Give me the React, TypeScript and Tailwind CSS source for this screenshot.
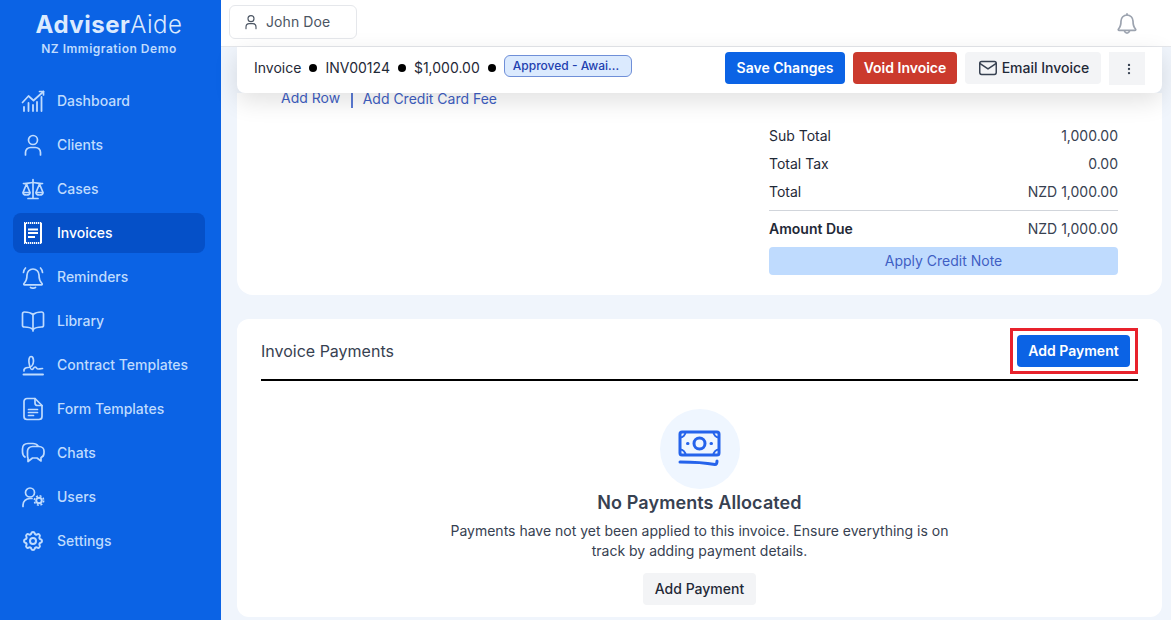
import React from 'react';
import { TbSettings, TbMail, TbDotsVertical } from 'react-icons/tb';

type IconProps = { className?: string };

const Stroke = ({ className, children }: IconProps & { children: React.ReactNode }) => (
  <svg viewBox="0 0 24 24" fill="none" stroke="currentColor" strokeWidth="1.7" strokeLinecap="round" strokeLinejoin="round" className={className}>
    {children}
  </svg>
);

const DashboardIcon = ({ className }: IconProps) => (
  <Stroke className={className}>
    <path d="M1.5 13.5 7.5 7l5 4.500L22.500 2.500" />
    <path d="M18.500 2.500h4v3.500" />
    <path d="M3 22v-4M7.500 22v-8M12 22v-6M16 22v-9M20.500 22V8" strokeWidth="1.800" />
  </Stroke>
);

const UserIcon = ({ className }: IconProps) => (
  <Stroke className={className}>
    <circle cx="12" cy="7" r="4.500" />
    <path d="M4.500 22v-2.500a5 5 0 0 1 5-5h5a5 5 0 0 1 5 5V22" />
  </Stroke>
);

const ScaleIcon = ({ className }: IconProps) => (
  <Stroke className={className}>
    <path d="M12 2.500v19M7 21.500h10" />
    <path d="M2.500 6.500c3 .5 6-1 9.500-1s6.500 1.500 9.500 1" />
    <path d="M5.500 7 2 15.500c0 1.500 1.500 2.500 3.500 2.500S9 17 9 15.500zM18.500 7 15 15.500c0 1.500 1.500 2.500 3.500 2.500s3.500-1 3.500-2.500z" />
    <path d="M2.500 15.500h6M15.500 15.500h6" />
  </Stroke>
);

const ReceiptIcon = ({ className }: IconProps) => (
  <svg viewBox="0 0 24 24" fill="none" stroke="currentColor" className={className}>
    <path d="M4 2v20M20 2v20" strokeWidth="2" />
    <path d="M3 2h18M3 22h18" strokeWidth="2" strokeDasharray="1.300 0.700" />
    <path d="M7 8.500h10M7 12h10M7 16h7" strokeWidth="1.800" />
  </svg>
);

const BellRingIcon = ({ className }: IconProps) => (
  <Stroke className={className}>
    <path d="M6 10a6 6 0 0 1 12 0c0 4.500 1 6.500 3 8.500.5.500.2 1.300-.6 1.300H3.600c-.8 0-1.100-.8-.6-1.300 2-2 3-4 3-8.500z" />
    <path d="M9.500 22.500c1.500.8 3.500.8 5 0" />
    <path d="M2.500 7.500c.2-1.800.9-3.400 2-4.500M21.500 7.500c-.2-1.800-.9-3.400-2-4.500" />
  </Stroke>
);

const BookIcon = ({ className }: IconProps) => (
  <Stroke className={className}>
    <path d="M12 5.500C10 3.800 7 3 3.500 3 2.200 3 1.500 3.700 1.500 5v11.500c0 1 .7 1.500 2 1.500C7 18 10 18.700 12 20.500c2-1.800 5-2.500 8.500-2.500 1.300 0 2-.5 2-1.500V5c0-1.300-.7-2-2-2C17 3 14 3.800 12 5.500z" />
    <path d="M12 5.500v16.500" />
  </Stroke>
);

const SignatureIcon = ({ className }: IconProps) => (
  <Stroke className={className}>
    <path d="M2.500 21.500h19.500" strokeWidth="1.900" />
    <path d="M3 18c-.5-2 1.500-3.500 4-3.500 3 0 5.500-2.500 5.500-6.500 0-2.500-1-4.500-2.500-4.500S7.500 6 8 9.500c.5 3.500 1.500 7 3 7 1.500 0 1.500-2.500 3-2.500s1.500 2 3 2 2-.5 4.500-.5" />
  </Stroke>
);

const FormIcon = ({ className }: IconProps) => (
  <Stroke className={className}>
    <path d="M14 1.500H6a3 3 0 0 0-3 3v15a3 3 0 0 0 3 3h12a3 3 0 0 0 3-3V8.500z" />
    <path d="M14 1.500V6a2.500 2.500 0 0 0 2.500 2.500H21" />
    <path d="M7.500 12.500h9M7.500 15.500h9M7.500 18.500h5" />
  </Stroke>
);

const ChatsIcon = ({ className }: IconProps) => (
  <Stroke className={className}>
    <path d="M17 5c-1-1.500-2.500-2.500-5-2.500H7C3.500 2.500 1.500 4.500 1.500 8v3c0 2.500 1 4 2.500 5" />
    <path d="M11.500 5.500h6.500c3 0 5 2 5 4.500v2c0 2.500-1.500 4-3 4.500v3.500l-4-3H11.500l-4.500 3.500V17c-.5-.5-.5-1.500-.5-2.500V10c0-2.500 2-4.500 5-4.500z" />
  </Stroke>
);

const UserCogIcon = ({ className }: IconProps) => (
  <Stroke className={className}>
    <circle cx="9" cy="7.500" r="4.500" />
    <path d="M2 21.500v-1.500c0-3.500 3-6.500 7-6.500h2" />
    <circle cx="18" cy="15.500" r="2.800" strokeWidth="2" />
    <circle cx="18" cy="15.500" r="4.700" strokeWidth="1.500" strokeDasharray="2 1.700" strokeLinecap="butt" />
  </Stroke>
);

const BellIcon = ({ className }: IconProps) => (
  <Stroke className={className}>
    <path d="M6 10a6 6 0 0 1 12 0c0 4.500 1 6.500 2.500 8 .5.500.2 1.300-.6 1.300H4.100c-.8 0-1.100-.8-.6-1.300C5 16.500 6 14.500 6 10z" />
    <path d="M9.500 20c.5 1.500 1.500 2.200 2.500 2.200s2-.7 2.500-2.200" />
    <path d="M12 4V2.800" />
  </Stroke>
);

const CashIcon = ({ className }: IconProps) => (
  <svg viewBox="0 0 44 38" fill="none" stroke="currentColor" strokeLinecap="round" strokeLinejoin="round" className={className}>
    <rect x="2" y="2" width="39" height="23" rx="2" strokeWidth="3" />
    <path d="M2 7.500c3 0 5.500-2.500 5.500-5.500M41 7.500c-3 0-5.500-2.500-5.500-5.500M2 19.500c3 0 5.500 2.500 5.500 5.500M41 19.500c-3 0-5.500 2.500-5.500 5.500" strokeWidth="2" />
    <circle cx="21.500" cy="13.500" r="5.500" strokeWidth="3" />
    <path d="M9.500 13.500h.5M33 13.500h.5" strokeWidth="3" />
    <path d="M2 32c12 0 24 .5 35 2.500 1.500 0 2-1 2-3.500" strokeWidth="3" />
  </svg>
);

const navItems = [
  { label: 'Dashboard', icon: DashboardIcon },
  { label: 'Clients', icon: UserIcon },
  { label: 'Cases', icon: ScaleIcon },
  { label: 'Invoices', icon: ReceiptIcon, active: true },
  { label: 'Reminders', icon: BellRingIcon },
  { label: 'Library', icon: BookIcon },
  { label: 'Contract Templates', icon: SignatureIcon },
  { label: 'Form Templates', icon: FormIcon },
  { label: 'Chats', icon: ChatsIcon },
  { label: 'Users', icon: UserCogIcon },
  { label: 'Settings', icon: TbSettings },
];

const Sidebar = () => (
  <aside className="w-[221px] h-full shrink-0 bg-[#0b63e5] flex flex-col">
    <div className="h-[81px] pt-[8px] pr-[3px] flex flex-col items-center text-[#dbeafe]">
      <div className="text-[24px] leading-[34px] font-bold tracking-[0.5px]">
        Adviser<span className="font-light">Aide</span>
      </div>
      <div className="text-[12px] leading-[14px] font-semibold tracking-[0.5px] text-[#bfdbfe]">NZ Immigration Demo</div>
    </div>
    <nav className="pl-[13px] pr-[16px] flex flex-col gap-1">
      {navItems.map((item) => {
        const Icon = item.icon;
        return (
          <a
            key={item.label}
            className={
              item.active
                ? 'h-10 rounded-lg bg-[#0550c8] text-white flex items-center gap-[12px] px-[8px] text-[14px] font-medium'
                : 'h-10 rounded-lg text-[#bfdbfe] flex items-center gap-[12px] px-[8px] text-[14px] font-medium'
            }
          >
            <Icon className="w-6 h-6 shrink-0" />
            <span className="pb-[2px]">{item.label}</span>
          </a>
        );
      })}
    </nav>
  </aside>
);

const Header = () => (
  <header className="h-[47px] shrink-0 bg-white border-b border-[#e5e7eb] pl-[8px] pr-[32px] flex items-center justify-between">
    <button className="w-[128px] h-[34px] mt-[-3px] border border-[#e5e7eb] rounded-md flex items-center gap-[7px] pl-[13px] text-[14px] text-[#4b5563]">
      <UserIcon className="w-4 h-4" />
      <span className="pb-[1px] tracking-[0.1px]">John Doe</span>
    </button>
    <BellIcon className="w-6 h-6 text-[#9ca3af]" />
  </header>
);

const InvoiceBar = () => (
  <div className="relative z-10 h-[46px] shrink-0 bg-white rounded-b-lg shadow-[0_8px_24px_rgba(0,0,0,0.12)] pl-[17px] pr-[17px] pt-[5px] flex items-start justify-between">
    <div className="h-8 flex items-center gap-[8px] text-[14px] text-[#1f2937]">
      <span className="pb-[2px]">Invoice</span>
      <span className="w-2 h-2 rounded-full bg-black" />
      <span className="pb-[2px]">INV00124</span>
      <span className="w-2 h-2 rounded-full bg-black" />
      <span className="pb-[2px]">$1,000.00</span>
      <span className="w-2 h-2 rounded-full bg-black" />
      <span className="w-[128px] h-[22px] mt-[-4px] pl-[8px] rounded-md border border-[#6f8fd8] bg-[#dbeafe] text-[#1e40af] text-[12px] font-medium flex items-center">
        Approved - Awai...
      </span>
    </div>
    <div className="flex items-start gap-[8px]">
      <button className="h-8 w-[120px] pb-[2px] rounded bg-[#0b63e5] text-white text-[14px] font-semibold">Save Changes</button>
      <button className="h-8 w-[104px] pb-[2px] rounded bg-[#cb3a2d] text-white text-[14px] font-semibold">Void Invoice</button>
      <button className="h-8 w-[136px] rounded bg-[#f3f4f6] text-[#1f2937] text-[14px] font-medium flex items-center justify-center gap-[3px]">
        <TbMail className="w-[22px] h-[22px] text-[#374151]" strokeWidth={1.6} />
        <span className="pb-[2px]">Email Invoice</span>
      </button>
      <button className="h-[33px] w-9 pl-[4px] bg-[#f3f4f6] text-[#374151] flex items-center justify-center">
        <TbDotsVertical className="w-[14px] h-[14px]" />
      </button>
    </div>
  </div>
);

const totals = [
  { label: 'Sub Total', value: '1,000.00' },
  { label: 'Total Tax', value: '0.00' },
  { label: 'Total', value: 'NZD 1,000.00' },
];

const InvoiceCard = () => (
  <section className="h-[202px] shrink-0 bg-white rounded-b-2xl pr-[44px]">
    <div className="h-3 pl-[44px] flex items-center text-[14px] text-[#3f5fc4]">
      <span className="pb-[4px]">Add Row</span>
      <span className="ml-[11px] mr-[10px] mt-[2px] w-[1.5px] h-[15px] bg-[#5b7bd5]" />
      <span className="pb-[2px]">Add Credit Card Fee</span>
    </div>
    <div className="ml-auto w-[349px] mt-[17px] text-[14px] text-[#1f2937]">
      {totals.map((row) => (
        <div key={row.label} className="h-7 pb-[2px] flex items-center justify-between">
          <span>{row.label}</span>
          <span className="text-[#374151]">{row.value}</span>
        </div>
      ))}
      <div className="mt-[4px] pb-[2px] border-t border-[#d1d5db] h-[37px] flex items-center justify-between">
        <span className="font-semibold text-[#1f2937]">Amount Due</span>
        <span className="text-[#374151]">NZD 1,000.00</span>
      </div>
      <button className="w-full h-7 pb-[2px] rounded-sm bg-[#bfdbfe] text-[#3f5fc4]">Apply Credit Note</button>
    </div>
  </section>
);

const PaymentsCard = () => (
  <section className="mt-[24px] h-[298px] shrink-0 bg-white rounded-xl px-[24px] flex flex-col">
    <div className="h-[62px] pt-1 shrink-0 border-b-2 border-black flex items-center justify-between">
      <h2 className="text-[16px] text-[#374151]">Invoice Payments</h2>
      <button className="relative mr-[8px] h-8 pb-[2px] w-[113px] rounded bg-[#0b63e5] text-white text-[14px] font-semibold">
        Add Payment
        <span className="absolute left-[-7px] right-[-8px] top-[-7px] bottom-[-7px] border-[3px] border-[#e8222c]" />
      </button>
    </div>
    <div className="pt-[28px] flex flex-col items-center">
      <div className="w-20 h-20 rounded-full bg-[#eff6ff] flex items-center justify-center">
        <CashIcon className="w-[44px] h-[38px] text-[#2563eb]" />
      </div>
      <h3 className="text-[18px] leading-[28px] font-semibold tracking-[0.1px] text-[#374151]">No Payments Allocated</h3>
      <p className="mt-[4px] w-[510px] text-center text-[14px] leading-[20px] text-[#374151]">
        Payments have not yet been applied to this invoice. Ensure everything is on track by adding payment details.
      </p>
      <button className="mt-[12px] h-8 pb-[2px] w-[113px] rounded bg-[#f3f4f6] text-[14px] font-medium text-[#1f2937]">Add Payment</button>
    </div>
  </section>
);

export default function App() {
  return (
    <div className="w-[1171px] h-[620px] overflow-hidden flex bg-[#f0f5fc] font-['Inter',sans-serif]">
      <Sidebar />
      <div className="flex-1 min-w-0 flex flex-col">
        <Header />
        <main className="flex-1 min-h-0 pl-[16px] pr-[9px] flex flex-col">
          <InvoiceBar />
          <InvoiceCard />
          <PaymentsCard />
        </main>
      </div>
    </div>
  );
}
